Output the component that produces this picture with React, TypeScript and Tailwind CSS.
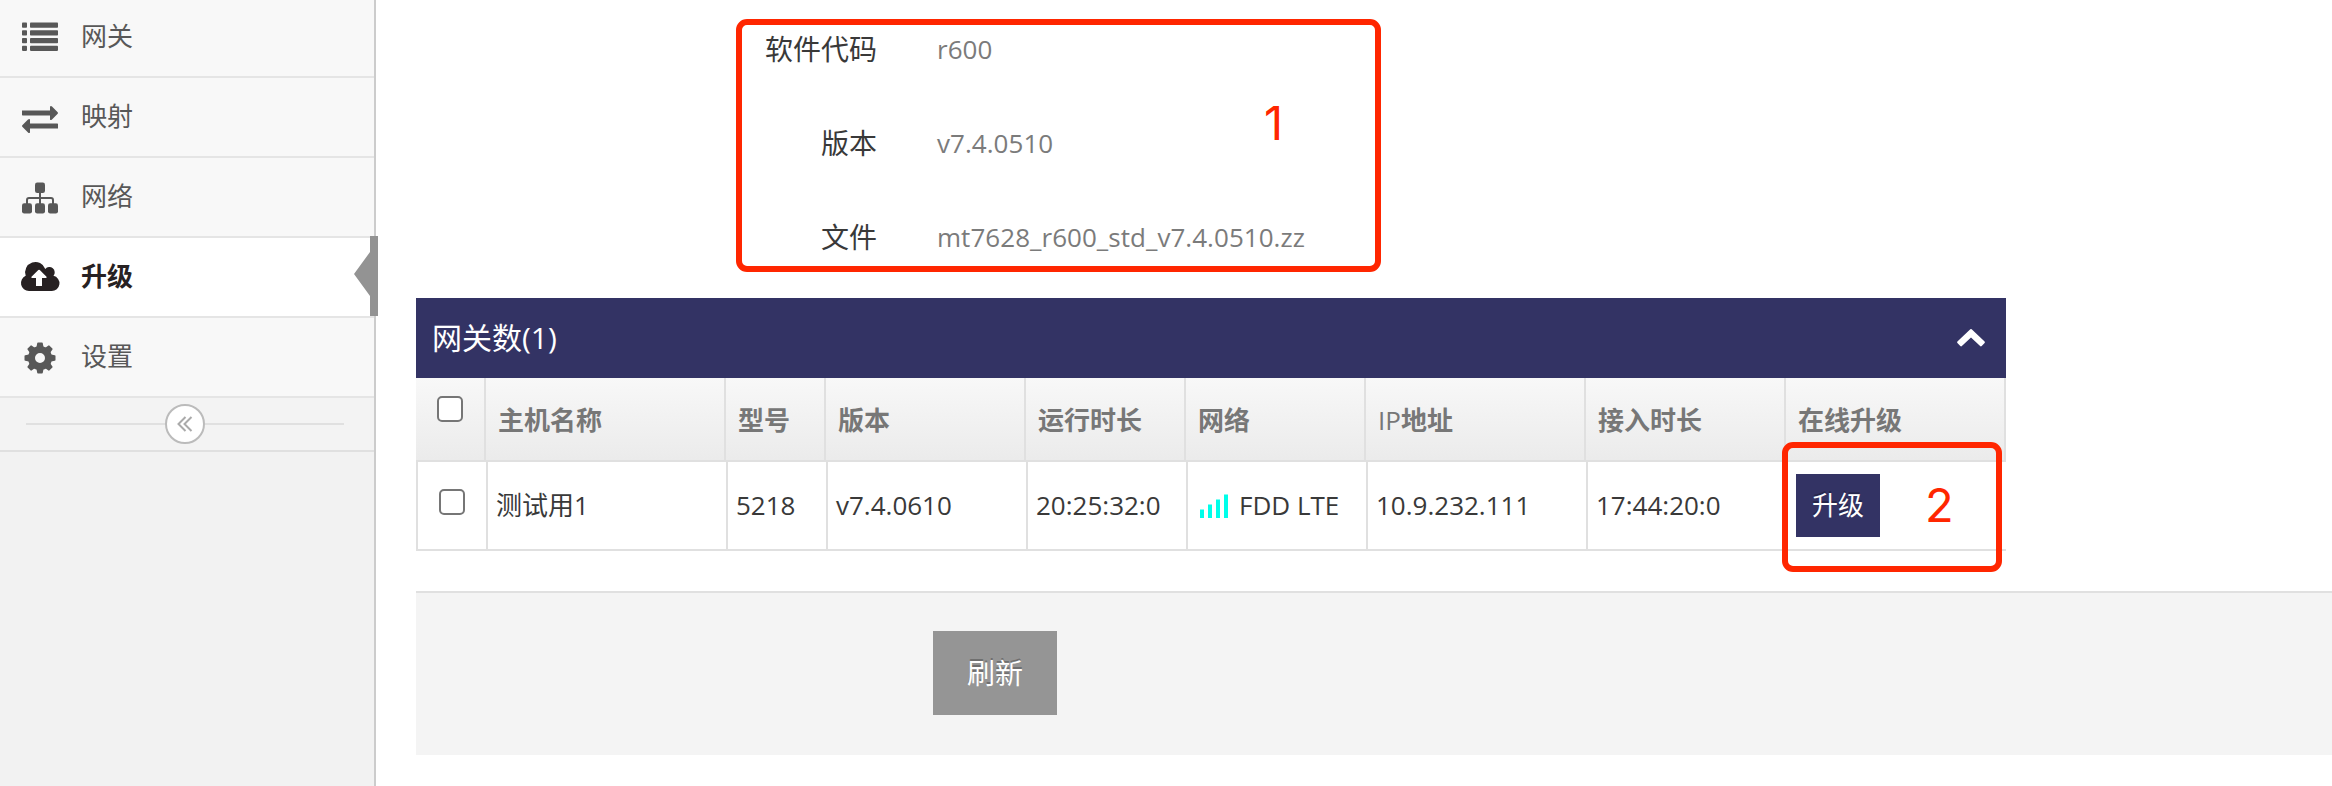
import React from "react";

const ICONS = {
  list: (
    <g>
      {[22.6, 30.3, 38, 45.7].map((y) => (
        <g key={y}>
          <rect x="22" y={y} width="5" height="5.2" rx="0.8" />
          <rect x="30" y={y} width="28" height="5.2" rx="0.8" />
        </g>
      ))}
    </g>
  ),
  exchange: (
    <path d="M22 30.6h28v-4q1-1.2 2 0l5.7 5.6q.6.8 0 1.6L52 39.5q-1.5 1-2 0v-4H22.5l-.5-.5zM58 48.4H30v4q-1 1.2-2 0l-5.7-5.6q-.6-.8 0-1.6L28 39.5q1.5-1 2 0v4h27.5l.5.5z" />
  ),
  sitemap: (
    <g>
      <rect x="35" y="22.5" width="10" height="10.5" rx="2.2" />
      <rect x="22" y="43.2" width="10" height="10.2" rx="2.2" />
      <rect x="35" y="43.2" width="10" height="10.2" rx="2.2" />
      <rect x="48" y="43.2" width="10" height="10.2" rx="2.2" />
      <path d="M40 32v12M27 44v-4q0-2 2-2h22q2 0 2 2v4" fill="none" stroke="currentColor" strokeWidth="2" />
    </g>
  ),
  cloud: (
    <path
      fillRule="evenodd"
      d="M29 51a8 8 0 0 1-3.3-15.3A10.3 10.3 0 0 1 45.3 29a5.3 5.3 0 0 1 8.2 6.8A7.7 7.7 0 0 1 51.5 51zM36 46h6v-8h4q1.2-.4.5-1.3L39.8 30q-.8-.7-1.5 0L31.5 36.7q-.7 1 .5 1.3h4z"
    />
  ),
  cog: (
    <g>
      <circle cx="40" cy="38" r="8.5" fill="none" stroke="currentColor" strokeWidth="7" />
      {[0, 45, 90, 135, 180, 225, 270, 315].map((a) => (
        <path key={a} transform={`rotate(${a} 40 38)`} d="M36.3 28l.9-4.8q.1-.7.8-.7h4q.7 0 .8.7l.9 4.8z" />
      ))}
    </g>
  ),
};

type IconName = keyof typeof ICONS;

const NAV: { label: string; icon: IconName; active?: boolean }[] = [
  { label: "网关", icon: "list" },
  { label: "映射", icon: "exchange" },
  { label: "网络", icon: "sitemap" },
  { label: "升级", icon: "cloud", active: true },
  { label: "设置", icon: "cog" },
];

function NavItem({ label, icon, active }: { label: string; icon: IconName; active?: boolean }) {
  return (
    <li
      className={
        active
          ? "relative flex h-20 items-center border-b-2 border-[#e5e5e5] bg-white font-bold text-[#272122]"
          : "relative flex h-20 items-center border-b-2 border-[#e5e5e5] bg-[#f8f8f8] text-[#585858]"
      }
    >
      <svg className="h-[78px] w-[81px] shrink-0" viewBox="0 -2 81 78" fill="currentColor">
        {ICONS[icon]}
      </svg>
      <span className="pb-[3px] text-[26px] leading-[38px]">{label}</span>
      {active && (
        <svg className="absolute -top-0.5 left-[354px] h-20 w-6" viewBox="0 0 24 80" fill="#939393">
          <path d="M16 0h8v80h-8V60L0 38l16-22z" />
        </svg>
      )}
    </li>
  );
}

function InfoRow({ label, value }: { label: string; value: string }) {
  return (
    <div className="flex h-[94px] items-start text-[28px] leading-10">
      <dt className="w-[461px] text-right text-[#393939]">{label}</dt>
      <dd className="ml-[60px] text-[26px] tracking-[0.04px] text-[#7b7b7b]">{value}</dd>
    </div>
  );
}

function Checkbox() {
  return <span className="block size-[26px] rounded-[5px] border-2 border-[#767676] bg-white" />;
}

const HEADS = ["主机名称", "型号", "版本", "运行时长", "网络", "IP地址", "接入时长", "在线升级"];

function Signal() {
  return (
    <svg className="mr-[11px] h-6 w-7" viewBox="0 0 28 24" fill="#00ffea">
      <rect x="0" y="15.5" width="4" height="8.5" />
      <rect x="8" y="10.5" width="4" height="13.5" />
      <rect x="16" y="5.5" width="4" height="18.5" />
      <rect x="24" y="0.5" width="4" height="23.5" />
    </svg>
  );
}

function GatewayTable() {
  return (
    <section className="w-[1590px]">
      <header className="flex h-20 items-center justify-between bg-[#333364] pl-4 pr-5 text-white">
        <h2 className="text-[30px] leading-10">网关数(1)</h2>
        <svg className="h-5 w-[30px]" viewBox="0 0 30 20" fill="white">
          <path d="M15.700 1.300 28.600 13.600q.7.7 0 1.400l-2.900 3.100q-.8.800-1.600 0L15 9.500l-9.100 8.600q-.8.800-1.600 0L1.400 15q-.7-.7 0-1.400L14.300 1.300q.7-.6 1.400 0z" />
        </svg>
      </header>
      <div className="grid h-[84px] grid-cols-[70px_240px_100px_200px_160px_180px_220px_200px_220px] border-b-2 border-[#e0e0e0] bg-linear-to-b from-[#f8f8f8] to-[#ebebeb] text-[26px] font-bold text-[#777]">
        <div className="border-r-2 border-[#e0e0e0] pl-[21px] pt-[18px]">
          <Checkbox />
        </div>
        {HEADS.map((h) => (
          <div key={h} className="flex items-center border-r-2 border-[#e0e0e0] pl-3 pt-0.5">
            {h === "IP地址" ? (
              <span>
                <span className="font-normal">IP</span>地址
              </span>
            ) : (
              h
            )}
          </div>
        ))}
      </div>
      <div className="grid h-[89px] grid-cols-[70px_240px_100px_200px_160px_180px_220px_200px_220px] border-b-2 border-[#e0e0e0] text-[26px] text-[#393939] *:flex *:items-center *:border-l-2 *:border-[#e0e0e0] *:pl-2">
        <div>
          <span className="-mt-[7px] ml-[13px]">
            <Checkbox />
          </span>
        </div>
        <div>测试用1</div>
        <div>5218</div>
        <div>v7.4.0610</div>
        <div>20:25:32:0</div>
        <div>
          <span className="ml-1">
            <Signal />
          </span>
          FDD LTE
        </div>
        <div>10.9.232.111</div>
        <div>17:44:20:0</div>
        <div>
          <button className="h-[63px] w-[84px] bg-[#333364] text-white [text-shadow:0_-2px_0_rgba(0,0,0,0.25)]">升级</button>
        </div>
      </div>
    </section>
  );
}

export default function App() {
  return (
    <div className="relative flex h-[786px] w-[2332px] overflow-hidden bg-white font-['Open_Sans','Noto_Sans_CJK_SC',sans-serif]">
      <nav className="h-full w-[376px] shrink-0 border-r-2 border-[#ccc] bg-[#f2f2f2]">
        <ul className="-mt-0.5">
          {NAV.map((n) => (
            <NavItem key={n.label} {...n} />
          ))}
        </ul>
        <div className="flex h-[54px] items-center border-b-2 border-[#e0e0e0] bg-[#f3f3f3] pl-[26px]">
          <span className="h-0.5 w-[139px] bg-[#e0e0e0]" />
          <span className="flex size-10 items-center justify-center rounded-full border-2 border-[#bbb] bg-white">
            <svg className="h-4 w-4" viewBox="0 0 16 16" fill="none" stroke="#aaa" strokeWidth="2">
              <path d="M8.5 1 1.5 8l7 7M14.5 1l-7 7 7 7" />
            </svg>
          </span>
          <span className="h-0.5 w-[139px] bg-[#e0e0e0]" />
        </div>
      </nav>
      <main className="flex-1 pl-10">
        <dl className="h-[298px] pt-[29px]">
          <InfoRow label="软件代码" value="r600" />
          <InfoRow label="版本" value="v7.4.0510" />
          <InfoRow label="文件" value="mt7628_r600_std_v7.4.0510.zz" />
        </dl>
        <GatewayTable />
        <footer className="mt-10 h-[164px] border-t-2 border-[#e0e0e0] bg-[#f4f4f4] pl-[517px] pt-[38px]">
          <button className="h-[84px] w-[124px] bg-[#959595] text-[28px] text-white [text-shadow:0_-2px_0_rgba(0,0,0,0.25)]">刷新</button>
        </footer>
      </main>
      <div className="absolute left-[736px] top-[19px] h-[253px] w-[645px] rounded-[11px] border-[6px] border-[#ff2600]">
        <span className="absolute left-[522px] top-[68px] font-['Inter'] text-[47px] leading-[60px] font-normal text-[#ff2600]">1</span>
      </div>
      <div className="absolute left-[1782px] top-[442px] h-[130px] w-[220px] rounded-[11px] border-[6px] border-[#ff2600]">
        <span className="absolute left-[137px] top-[27px] font-['Inter'] text-[47px] leading-[60px] font-normal text-[#ff2600]">2</span>
      </div>
    </div>
  );
}
